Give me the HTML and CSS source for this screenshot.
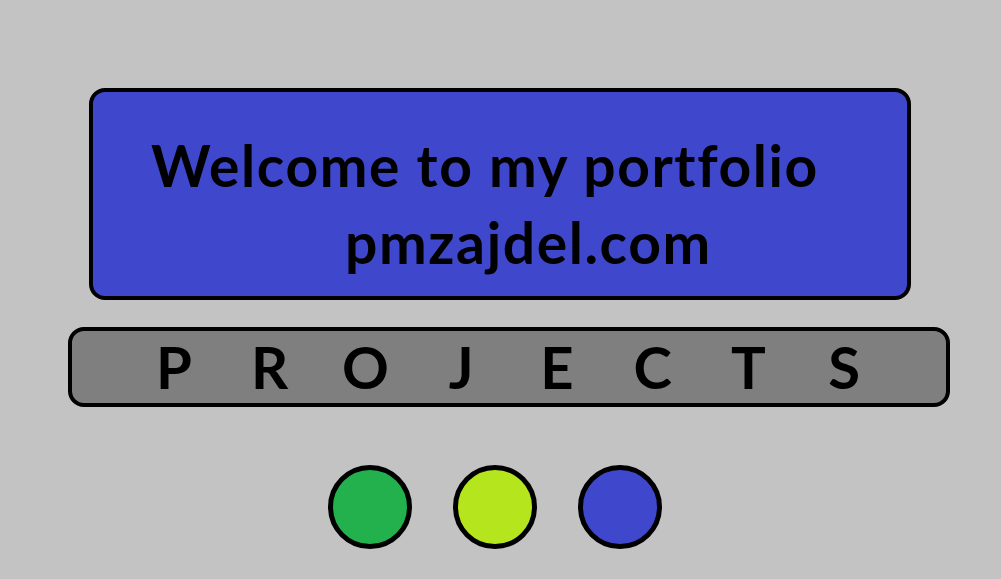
FILE: index.html
```html
<!DOCTYPE html>
<html lang="en">
<head>
<meta charset="utf-8">
<title>pmzajdel.com</title>
<link rel="stylesheet" href="styles.css">
</head>
<body>
<main class="page">
  <section class="hero">
    <h1 class="hero-title">Welcome to my portfolio</h1>
    <p class="hero-site">pmzajdel.com</p>
  </section>
  <nav class="projects">
    <span class="letter">P</span>
    <span class="letter">R</span>
    <span class="letter">O</span>
    <span class="letter">J</span>
    <span class="letter">E</span>
    <span class="letter">C</span>
    <span class="letter">T</span>
    <span class="letter">S</span>
  </nav>
  <div class="dots">
    <span class="dot dot-green"></span>
    <span class="dot dot-lime"></span>
    <span class="dot dot-blue"></span>
  </div>
</main>
</body>
</html>
```
FILE: styles.css
```css
html, body {
  margin: 0;
  padding: 0;
}
body {
  background: #c3c3c3;
  font-family: "Lato", "Open Sans", sans-serif;
  font-weight: 700;
  color: #000;
  width: 1001px;
  height: 579px;
  overflow: hidden;
}
.page {
  padding-top: 88px;
}
.hero {
  box-sizing: border-box;
  margin-left: 89px;
  width: 822px;
  height: 212px;
  border: 4px solid #000;
  border-radius: 16px;
  background: #3f48cc;
  padding-top: 35px;
}
.hero-title,
.hero-site {
  margin: 0;
  font-size: 57px;
  font-weight: 700;
  letter-spacing: 1.6px;
  line-height: 77px;
  white-space: nowrap;
}
.hero-title {
  padding-left: 58px;
}
.hero-site {
  padding-left: 252px;
}
.projects {
  box-sizing: border-box;
  margin-top: 27px;
  margin-left: 68px;
  width: 882px;
  height: 80px;
  border: 4px solid #000;
  border-radius: 16px;
  background: #7f7f7f;
  padding: 0 54px;
  display: grid;
  grid-template-columns: repeat(8, 1fr);
  align-items: center;
}
.letter {
  text-align: center;
  font-size: 58px;
  line-height: 72px;
}
.dots {
  margin-top: 58px;
  margin-left: 328px;
  display: flex;
  gap: 41px;
}
.dot {
  box-sizing: border-box;
  width: 84px;
  height: 84px;
  border: 5px solid #000;
  border-radius: 50%;
}
.dot-green { background: #22b14c; }
.dot-lime { background: #b5e61d; }
.dot-blue { background: #3f48cc; }
```
